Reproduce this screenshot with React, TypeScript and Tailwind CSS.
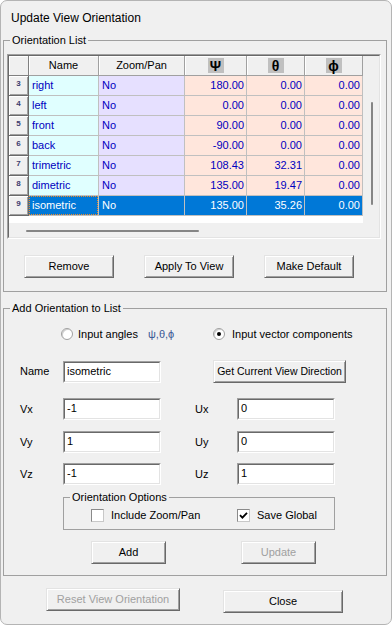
import React from 'react';

const font = { fontFamily: '"Liberation Sans", Arial, sans-serif' };

const rows = [
  { n: 3, name: 'right', zp: 'No', psi: '180.00', th: '0.00', ph: '0.00' },
  { n: 4, name: 'left', zp: 'No', psi: '0.00', th: '0.00', ph: '0.00' },
  { n: 5, name: 'front', zp: 'No', psi: '90.00', th: '0.00', ph: '0.00' },
  { n: 6, name: 'back', zp: 'No', psi: '-90.00', th: '0.00', ph: '0.00' },
  { n: 7, name: 'trimetric', zp: 'No', psi: '108.43', th: '32.31', ph: '0.00' },
  { n: 8, name: 'dimetric', zp: 'No', psi: '135.00', th: '19.47', ph: '0.00' },
  { n: 9, name: 'isometric', zp: 'No', psi: '135.00', th: '35.26', ph: '0.00' },
];

function Btn({ w, label, disabled, size = 'text-[11px]', className = '' }: { w: string; label: string; disabled?: boolean; size?: string; className?: string }) {
  return (
    <div
      className={`${w} h-[23px] shrink-0 bg-[#f0f0f0] border border-t-[#e3e3e3] border-l-[#e3e3e3] border-r-[#696969] border-b-[#696969] shadow-[inset_1px_1px_0_#ffffff,inset_-1px_-1px_0_#a0a0a0] flex items-center justify-center whitespace-nowrap ${size} ${disabled ? 'text-[#a0a0a0]' : 'text-black'} ${className}`}
    >
      {label}
    </div>
  );
}

function Field({ value, className = '' }: { value: string; className?: string }) {
  return (
    <div className={`w-[98px] h-[22px] shrink-0 border border-t-[#a0a0a0] border-l-[#a0a0a0] border-r-white border-b-white ${className}`}>
      <div className="h-full bg-white border border-t-[#696969] border-l-[#696969] border-r-[#e3e3e3] border-b-[#e3e3e3] pl-[2px] pt-[2px] text-[11px] leading-[13px] text-black">
        {value}
      </div>
    </div>
  );
}

function Radio({ on }: { on?: boolean }) {
  return (
    <div className="w-[12px] h-[12px] rounded-full bg-white border border-[#a0a0a0] shadow-[inset_1px_1px_0_#d0d0d0] flex items-center justify-center shrink-0">
      {on && <div className="w-[4px] h-[4px] rounded-full bg-black" />}
    </div>
  );
}

function Check({ on }: { on?: boolean }) {
  return (
    <div className="w-[13px] h-[13px] bg-white border border-t-[#8a8a8a] border-l-[#8a8a8a] border-r-[#c8c8c8] border-b-[#c8c8c8] shrink-0 flex items-center justify-center">
      {on && (
        <svg width="9" height="9" viewBox="0 0 9 9">
          <path d="M1 4.2 L3.4 6.6 L8 1.8" fill="none" stroke="#000" strokeWidth="1.8" />
        </svg>
      )}
    </div>
  );
}

export default function App() {
  const colW = ['w-[20px]', 'w-[70px]', 'w-[86px]', 'w-[62px]', 'w-[58px]', 'w-[58px]'];

  return (
    <div style={font} className="w-[392px] h-[625px] bg-[#f0f0f0] border border-[#b4b4b4] rounded-[7px] overflow-hidden text-black">
      {/* Title */}
      <div className="h-[33px] pl-[10px] flex items-center text-[12px]">Update View Orientation</div>

      {/* Orientation List */}
      <fieldset className="ml-[2px] w-[384px] border border-[#a0a0a0] pl-[3px] pt-[7px] pb-[13px]">
        <legend className="ml-[3px] px-[2px] text-[11px] leading-[13px]">Orientation List</legend>

        <div className="w-[374px] h-[185px] border border-t-[#a0a0a0] border-l-[#a0a0a0] border-r-white border-b-white">
          <div className="h-full border border-t-[#696969] border-l-[#696969] border-r-[#e3e3e3] border-b-[#e3e3e3] bg-[#f0f0f0] flex flex-col">
            <div className="flex">
              <div className="w-[354px] h-[167px] bg-white flex flex-col">
                {/* header */}
                <div className="flex h-[20px] shrink-0">
                  <div className={`${colW[0]} h-full border-r border-b border-[#808080] shadow-[inset_1px_1px_0_#fff] bg-[#f0f0f0]`} />
                  <div className={`${colW[1]} h-full border-r border-b border-[#a0a0a0] shadow-[inset_1px_1px_0_#fff] bg-[#f0f0f0] flex items-center justify-center text-[11px]`}>Name</div>
                  <div className={`${colW[2]} h-full border-r border-b border-[#a0a0a0] shadow-[inset_1px_1px_0_#fff] bg-[#f0f0f0] flex items-center justify-center text-[11px]`}>Zoom/Pan</div>
                  {['Ψ', 'θ', 'ϕ'].map((g, i) => (
                    <div key={g} className={`${colW[3 + i]} h-full border-r border-b border-[#a0a0a0] shadow-[inset_1px_1px_0_#fff] bg-[#f0f0f0] flex items-center justify-center`}>
                      <div className="w-[16px] h-[15px] bg-[#c0c0c0] flex items-center justify-center text-[14px] font-bold leading-none">{g}</div>
                    </div>
                  ))}
                </div>
                {rows.map((r, idx) => {
                  const sel = idx === rows.length - 1;
                  const txt = sel ? 'text-white' : 'text-[#0000c0]';
                  return (
                    <div key={r.n} className="flex h-[20px] shrink-0 text-[11px]">
                      <div className={`${colW[0]} h-full bg-[#f0f0f0] border-r border-b border-r-[#696969] border-b-[#696969] shadow-[inset_1px_1px_0_#fff,inset_-1px_-1px_0_#a0a0a0] flex justify-center pt-[3px] text-[8px] font-bold leading-[9px] text-[#3c3c6e]`}>
                        {r.n}
                      </div>
                      <div className={`${colW[1]} h-full border-r border-b border-[#c0c0c0] ${sel ? 'bg-[#0078d7]' : 'bg-[#e0ffff]'} ${txt} flex items-center`}>
                        {sel ? (
                          <div className="w-full h-full border border-dotted border-[#1a1a1a] outline-1 outline-dotted outline-offset-[-1px] outline-[#f08c28] flex items-center pl-[2px]">{r.name}</div>
                        ) : (
                          <span className="pl-[3px]">{r.name}</span>
                        )}
                      </div>
                      <div className={`${colW[2]} h-full border-r border-b border-[#c0c0c0] ${sel ? 'bg-[#0078d7]' : 'bg-[#e6e0ff]'} ${txt} flex items-center pl-[3px]`}>{r.zp}</div>
                      {[r.psi, r.th, r.ph].map((v, i) => (
                        <div key={i} className={`${colW[3 + i]} h-full border-r border-b border-[#c0c0c0] ${sel ? 'bg-[#0078d7]' : 'bg-[#ffe6dc]'} ${txt} flex items-center justify-end pr-[2px]`}>{v}</div>
                      ))}
                    </div>
                  );
                })}
              </div>
              {/* vertical scroll */}
              <div className="w-[16px] h-[167px]">
                <div className="ml-[8px] mt-[46px] w-[2px] h-[103px] bg-[#858585] rounded-full" />
              </div>
            </div>
            {/* horizontal scroll */}
            <div className="h-[14px]">
              <div className="ml-[17px] mt-[7px] w-[173px] h-[2px] bg-[#858585] rounded-full" />
            </div>
          </div>
        </div>

        <div className="flex mt-[16px]">
          <Btn w="w-[90px]" label="Remove" className="ml-[17px]" />
          <Btn w="w-[90px]" label="Apply To View" className="ml-[30px]" />
          <Btn w="w-[90px]" label="Make Default" className="ml-[30px]" />
        </div>
      </fieldset>

      {/* Add Orientation */}
      <fieldset className="ml-[2px] mt-[10px] w-[384px] border border-[#a0a0a0] pb-[11px] text-[11px]">
        <legend className="ml-[6px] px-[2px] text-[11px] leading-[13px]">Add Orientation to List</legend>

        <div className="flex items-center h-[16px] mt-[11px]">
          <div className="ml-[57px] w-[87px] flex items-center">
            <Radio />
            <span className="ml-[5px]">Input angles</span>
          </div>
          <div className="w-[65px] text-[#3c5a96]">ψ,θ,ϕ</div>
          <Radio on />
          <span className="ml-[7px]">Input vector components</span>
        </div>

        <div className="flex items-center h-[23px] mt-[18px]">
          <div className="ml-[16px] w-[43px]">Name</div>
          <Field value="isometric" />
          <Btn w="w-[133px]" label="Get Current View Direction" size="text-[10.5px]" className="ml-[52px]" />
        </div>

        {[
          ['Vx', '-1', 'Ux', '0', 'mt-[15px]'],
          ['Vy', '1', 'Uy', '0', 'mt-[11px]'],
          ['Vz', '-1', 'Uz', '1', 'mt-[10px]'],
        ].map(([a, av, b, bv, m]) => (
          <div key={a} className={`flex items-center h-[22px] ${m}`}>
            <div className="ml-[16px] w-[43px]">{a}</div>
            <Field value={av} />
            <div className="ml-[34px] w-[42px]">{b}</div>
            <Field value={bv} />
          </div>
        ))}

        <fieldset className="ml-[59px] mt-[6px] w-[272px] border border-[#a0a0a0] pl-[6px] pt-[5px] pb-[7px]">
          <legend className="px-[2px] text-[11px] leading-[13px]">Orientation Options</legend>
          <div className="flex items-center h-[13px]">
            <div className="ml-[21px] w-[146px] flex items-center">
              <Check />
              <span className="ml-[7px]">Include Zoom/Pan</span>
            </div>
            <Check on />
            <span className="ml-[7px]">Save Global</span>
          </div>
        </fieldset>

        <div className="flex mt-[11px]">
          <Btn w="w-[75px]" label="Add" className="ml-[87px]" />
          <Btn w="w-[75px]" label="Update" disabled className="ml-[75px]" />
        </div>
      </fieldset>

      <div className="flex items-start">
        <Btn w="w-[134px]" label="Reset View Orientation" disabled className="ml-[45px] mt-[12px]" />
        <Btn w="w-[120px]" label="Close" className="ml-[43px] mt-[14px]" />
      </div>
    </div>
  );
}
